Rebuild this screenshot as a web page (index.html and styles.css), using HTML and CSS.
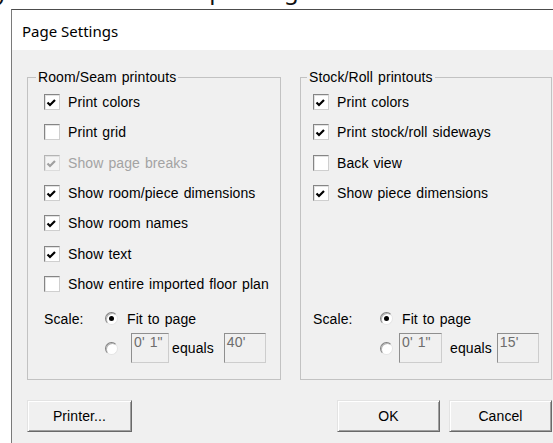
FILE: index.html
```html
<!DOCTYPE html>
<html lang="en">
<head>
<meta charset="utf-8">
<title>Page Settings</title>
<link rel="stylesheet" href="styles.css">
</head>
<body>
  <div class="backdrop">
    <div class="backdrop-line"><span class="frag frag-y">y</span><span class="frag frag-p">p</span><span class="frag frag-g">g</span></div>
  </div>

  <div class="dialog">
    <div class="titlebar">Page Settings</div>

    <div class="client">
      <div class="groups">
        <fieldset class="group group-room">
          <legend>Room/Seam printouts</legend>
          <div class="options">
            <label class="opt"><span class="box on"><svg viewBox="0 0 14 14"><polyline points="2.5,7.5 5,10 10,5"/></svg></span>Print colors</label>
            <label class="opt"><span class="box"></span>Print grid</label>
            <label class="opt disabled"><span class="box on"><svg viewBox="0 0 14 14"><polyline points="2.5,7.5 5,10 10,5"/></svg></span>Show page breaks</label>
            <label class="opt"><span class="box on"><svg viewBox="0 0 14 14"><polyline points="2.5,7.5 5,10 10,5"/></svg></span>Show room/piece dimensions</label>
            <label class="opt"><span class="box on"><svg viewBox="0 0 14 14"><polyline points="2.5,7.5 5,10 10,5"/></svg></span>Show room names</label>
            <label class="opt"><span class="box on"><svg viewBox="0 0 14 14"><polyline points="2.5,7.5 5,10 10,5"/></svg></span>Show text</label>
            <label class="opt"><span class="box"></span>Show entire imported floor plan</label>
          </div>
          <div class="scale">
            <span class="scale-label">Scale:</span>
            <div class="scale-line"><span class="radio on"></span><span class="radio-text">Fit to page</span></div>
            <div class="scale-line ratio">
              <span class="radio"></span>
              <span class="field field-a">0' 1"</span>
              <span class="equals">equals</span>
              <span class="field field-b">40'</span>
            </div>
          </div>
        </fieldset>

        <fieldset class="group group-stock">
          <legend>Stock/Roll printouts</legend>
          <div class="options">
            <label class="opt"><span class="box on"><svg viewBox="0 0 14 14"><polyline points="2.5,7.5 5,10 10,5"/></svg></span>Print colors</label>
            <label class="opt"><span class="box on"><svg viewBox="0 0 14 14"><polyline points="2.5,7.5 5,10 10,5"/></svg></span>Print stock/roll sideways</label>
            <label class="opt"><span class="box"></span>Back view</label>
            <label class="opt"><span class="box on"><svg viewBox="0 0 14 14"><polyline points="2.5,7.5 5,10 10,5"/></svg></span>Show piece dimensions</label>
          </div>
          <div class="scale">
            <span class="scale-label">Scale:</span>
            <div class="scale-line"><span class="radio on"></span><span class="radio-text">Fit to page</span></div>
            <div class="scale-line ratio">
              <span class="radio"></span>
              <span class="field field-a">0' 1"</span>
              <span class="equals">equals</span>
              <span class="field field-b">15'</span>
            </div>
          </div>
        </fieldset>
      </div>

      <div class="actions">
        <button class="btn btn-printer" type="button">Printer...</button>
        <button class="btn btn-ok" type="button">OK</button>
        <button class="btn btn-cancel" type="button">Cancel</button>
      </div>
    </div>
  </div>
</body>
</html>
```

FILE: styles.css
```css
html, body {
  margin: 0;
  padding: 0;
}

body {
  width: 553px;
  height: 443px;
  overflow: hidden;
  background: #ffffff;
  font-family: "Liberation Sans", Arial, sans-serif;
  font-size: 14px;
  line-height: 16px;
  letter-spacing: 0.1px;
  word-spacing: 1px;
  color: #000;
}

/* window text peeking out above the dialog */
.backdrop {
  height: 9px;
  overflow: hidden;
  font-family: "Noto Sans", sans-serif;
  font-size: 24px;
  line-height: 24px;
  letter-spacing: 0;
  word-spacing: 0;
  color: #111;
}

.backdrop-line {
  margin-top: -22px;
  white-space: pre;
}

.frag { display: inline-block; }
.frag-y { margin-left: -4px; }
.frag-p { margin-left: 201px; }
.frag-g { margin-left: 60px; }

/* dialog frame */
.dialog {
  margin-left: 11px;
  height: 434px;
  border-left: 1px solid #7a7a7a;
  border-top: 1px solid #4c4c4c;
  background: #f0f0f0;
}

.titlebar {
  height: 40px;
  box-sizing: border-box;
  padding: 11px 0 0 10px;
  background: #ffffff;
  font-family: "Noto Sans", "Open Sans", sans-serif;
  font-size: 15px;
  line-height: 20px;
  letter-spacing: 0;
  word-spacing: 0;
  color: #000;
}

.client {
  padding: 19px 0 0 15px;
}

.groups {
  display: flex;
  gap: 19px;
  width: 525px;
}

/* group boxes */
.group {
  margin: 0;
  padding: 2px 0 16px 0;
  border: 1px solid #c2c2c2;
  display: flex;
  flex-direction: column;
  min-width: 0;
  box-sizing: border-box;
}

.group legend {
  padding: 0 2px;
  line-height: 16px;
}

.group-room { width: 254px; }
.group-room legend { margin-left: 8px; }
.group-room .options,
.group-room .scale { padding-left: 16px; }

.group-stock { width: 252px; }
.group-stock legend { margin-left: 6px; }
.group-stock .options,
.group-stock .scale { padding-left: 12px; }

.options {
  display: flex;
  flex-direction: column;
  padding-bottom: 5px;
}

.opt {
  display: flex;
  align-items: center;
  gap: 8px;
  height: 30.33px;
  white-space: nowrap;
}

.opt.disabled { color: #a3a3a3; }

/* checkboxes */
.box {
  width: 14px;
  height: 14px;
  flex: none;
  background: #ffffff;
  border: 1px solid;
  border-color: #858585 #cfcfcf #cfcfcf #858585;
  box-shadow: inset 1px 1px 0 #e2e2e2;
}

.box svg {
  display: block;
  width: 14px;
  height: 14px;
}

.box polyline {
  fill: none;
  stroke: #000;
  stroke-width: 2.2;
}

.disabled .box {
  background: #f4f4f4;
  border-color: #b4b4b4 #dcdcdc #dcdcdc #b4b4b4;
}

.disabled .box polyline { stroke: #a0a0a0; }

/* scale selector */
.scale {
  margin-top: auto;
  display: grid;
  grid-template-columns: var(--label-w) auto;
  grid-template-rows: 29px 30px;
  align-items: center;
}

.group-room .scale { --label-w: 61px; --field-gap: 13px; }
.group-stock .scale { --label-w: 67px; --field-gap: 6px; }

.scale-label {
  grid-column: 1;
  grid-row: 1;
}

.scale-line {
  grid-column: 2;
  display: flex;
  align-items: center;
  height: 100%;
  white-space: nowrap;
}

.scale-line .radio-text { margin-left: 9px; }

.radio {
  width: 11px;
  height: 11px;
  flex: none;
  border-radius: 50%;
  background: #ffffff;
  border: 1px solid;
  border-color: #808080 #e4e4e4 #e4e4e4 #808080;
  box-shadow: inset 1px 1px 0 #b5b5b5;
  display: flex;
  align-items: center;
  justify-content: center;
}

.radio.on::after {
  content: "";
  width: 5px;
  height: 5px;
  border-radius: 50%;
  background: #000;
}

.ratio .field-a { margin-left: var(--field-gap); }

.field {
  height: 30px;
  box-sizing: border-box;
  padding: 0 0 0 2px;
  background: #f0f0f0;
  border: 1px solid;
  border-color: #8f8f8f #cdcdcd #cdcdcd #8f8f8f;
  color: #6d6d6d;
  line-height: 16px;
}

.group-room .field-a { width: 38px; }
.group-room .equals { margin: 0 10px 0 3px; }
.group-stock .field-a { width: 43px; }
.group-stock .equals { margin: 0 5px 0 8px; }
.field-b { width: 42px; }

/* push buttons */
.actions {
  display: flex;
  width: 525px;
  margin-top: 20px;
}

.btn {
  height: 32px;
  box-sizing: border-box;
  padding: 0;
  font: inherit;
  letter-spacing: inherit;
  word-spacing: inherit;
  color: #000;
  background: #f0f0f0;
  border: 1px solid;
  border-color: #e3e3e3 #696969 #696969 #e3e3e3;
  box-shadow: inset 1px 1px 0 #ffffff, inset -1px -1px 0 #a0a0a0;
}

.btn-printer { width: 105px; }
.btn-ok { width: 103px; margin-left: auto; }
.btn-cancel { width: 103px; margin-left: 9px; }
```
